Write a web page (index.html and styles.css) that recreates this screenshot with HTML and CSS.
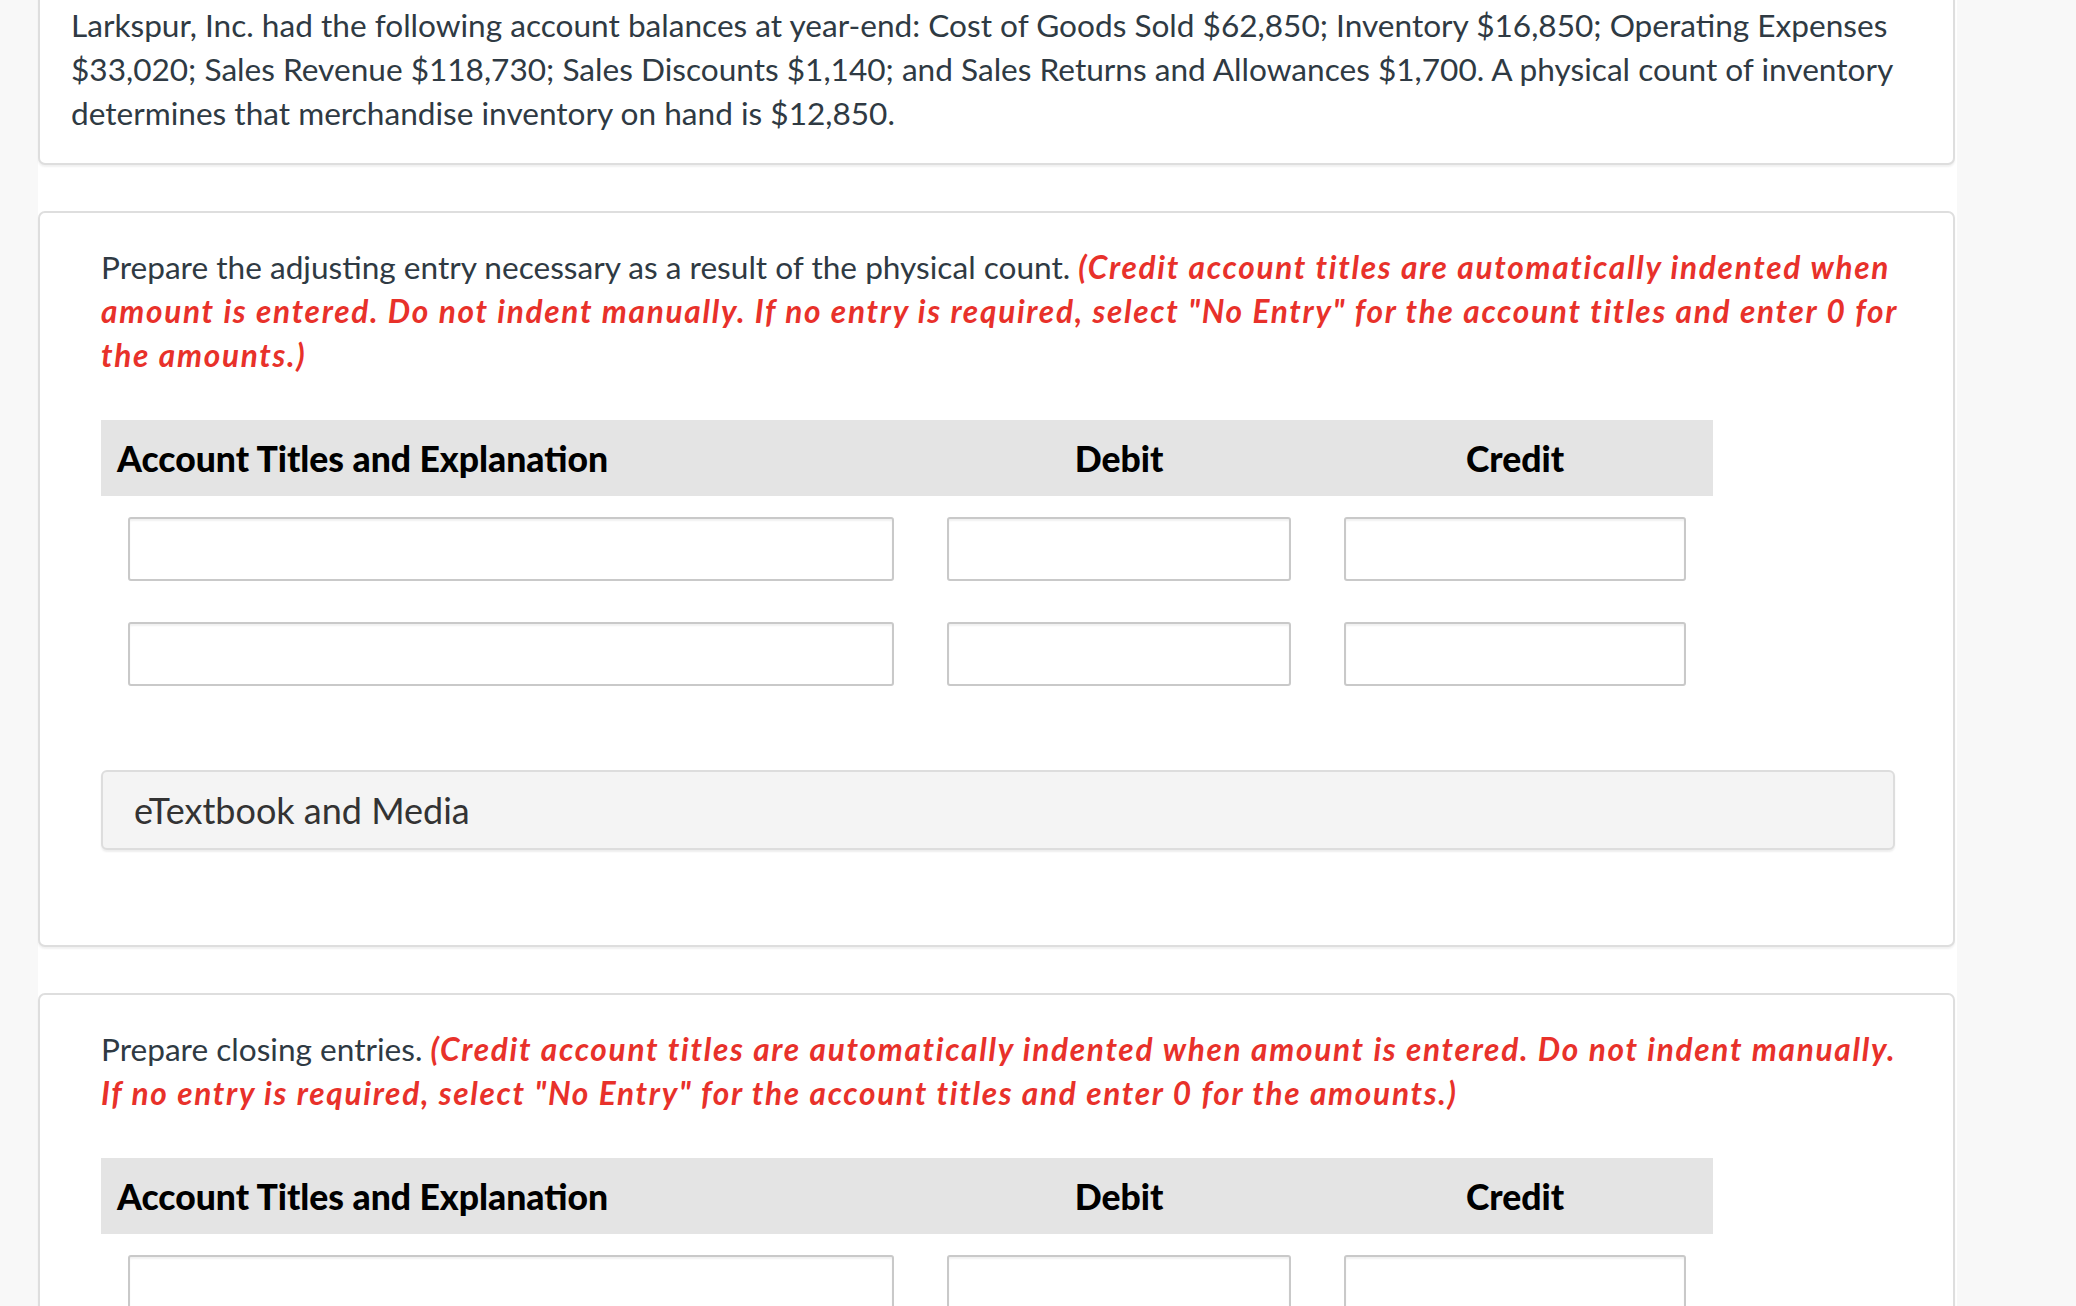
FILE: index.html
```html
<!DOCTYPE html>
<html lang="en">
<head>
<meta charset="utf-8">
<title>Larkspur, Inc.</title>
<link rel="stylesheet" href="styles.css">
</head>
<body>
<div class="page">
  <main class="column">
    <section class="card card-intro">
      <p class="body-text">Larkspur, Inc. had the following account balances at year-end: Cost of Goods Sold $62,850; Inventory $16,850; Operating Expenses $33,020; Sales Revenue $118,730; Sales Discounts $1,140; and Sales Returns and Allowances $1,700. A physical count of inventory determines that merchandise inventory on hand is $12,850.</p>
    </section>

    <section class="card card-part">
      <p class="body-text">Prepare the adjusting entry necessary as a result of the physical count. <em class="note">(Credit account titles are automatically indented when amount is entered. Do not indent manually. If no entry is required, select "No Entry" for the account titles and enter 0 for the amounts.)</em></p>
      <div class="journal">
        <div class="jhead">
          <div class="hcell hcell-title">Account Titles and Explanation</div>
          <div class="hcell hcell-num">Debit</div>
          <div class="hcell hcell-num">Credit</div>
        </div>
        <div class="jrow">
          <div class="jcell"><input class="field" type="text" aria-label="Account title"></div>
          <div class="jcell"><input class="field" type="text" aria-label="Debit"></div>
          <div class="jcell"><input class="field" type="text" aria-label="Credit"></div>
        </div>
        <div class="jrow">
          <div class="jcell"><input class="field" type="text" aria-label="Account title"></div>
          <div class="jcell"><input class="field" type="text" aria-label="Debit"></div>
          <div class="jcell"><input class="field" type="text" aria-label="Credit"></div>
        </div>
      </div>
      <div class="media">eTextbook and Media</div>
    </section>

    <section class="card card-part">
      <p class="body-text">Prepare closing entries. <em class="note">(Credit account titles are automatically indented when amount is entered. Do not indent manually. If no entry is required, select "No Entry" for the account titles and enter 0 for the amounts.)</em></p>
      <div class="journal">
        <div class="jhead">
          <div class="hcell hcell-title">Account Titles and Explanation</div>
          <div class="hcell hcell-num">Debit</div>
          <div class="hcell hcell-num">Credit</div>
        </div>
        <div class="jrow">
          <div class="jcell"><input class="field" type="text" aria-label="Account title"></div>
          <div class="jcell"><input class="field" type="text" aria-label="Debit"></div>
          <div class="jcell"><input class="field" type="text" aria-label="Credit"></div>
        </div>
        <div class="jrow">
          <div class="jcell"><input class="field" type="text" aria-label="Account title"></div>
          <div class="jcell"><input class="field" type="text" aria-label="Debit"></div>
          <div class="jcell"><input class="field" type="text" aria-label="Credit"></div>
        </div>
      </div>
    </section>
  </main>
</div>
</body>
</html>
```

FILE: styles.css
```css
* { box-sizing: border-box; }

html, body {
  margin: 0;
  padding: 0;
  background: #f8f8f8;
  overflow: hidden;
}

body {
  font-family: Lato, "Open Sans", "Liberation Sans", sans-serif;
  color: #2f3a43;
}

.page {
  height: 1306px;
  overflow: hidden;
}

.column {
  margin-left: 38px;
  width: 1919px;
  background: #ffffff;
  margin-top: -31px;
  padding-bottom: 400px;
}

.card {
  margin-right: 2px;
  background: #ffffff;
  border: 2px solid #dedede;
  border-radius: 7px;
  box-shadow: 0 2px 2px rgba(0, 0, 0, 0.06);
}

.card + .card {
  margin-top: 46px;
}

.card-intro {
  padding: 32px 30px 28px 31px;
}

.card-part {
  padding: 32px 58px 95px 61px;
}

.body-text {
  margin: 0;
  font-size: 31.6px;
  line-height: 44px;
}

.card-part .body-text {
  margin-right: -10px;
}

.note {
  color: #e8312a;
  font-style: italic;
  font-weight: 700;
  letter-spacing: 1.7px;
}

.journal {
  margin-top: 43px;
  width: 1612px;
}

.jhead {
  display: grid;
  grid-template-columns: 820px 396px 396px;
  height: 76px;
  align-items: center;
  background: #e4e4e4;
  color: #000000;
  font-weight: 900;
  font-size: 35.5px;
}

.hcell-title {
  padding-left: 16px;
}

.hcell-num {
  text-align: center;
}

.jrow {
  display: grid;
  grid-template-columns: 820px 396px 396px;
  padding: 21px 0 20px;
}

.jcell {
  padding: 0 27px 0 27px;
}

.jrow .jcell:nth-child(2) {
  padding: 0 26px 0 26px;
}

.field {
  display: block;
  width: 100%;
  height: 64px;
  margin: 0;
  border: 2px solid #c9c9c9;
  border-radius: 3px;
  background: #ffffff;
  box-shadow: inset 0 2px 2px rgba(0, 0, 0, 0.06);
  font: inherit;
  font-size: 28px;
  padding: 0 12px;
}

.media {
  margin-top: 64px;
  height: 80px;
  display: flex;
  align-items: center;
  padding-left: 31px;
  background: #f4f4f4;
  border: 2px solid #dddddd;
  border-radius: 6px;
  box-shadow: 0 2px 2px rgba(0, 0, 0, 0.07);
  font-size: 36px;
  color: #333333;
}
```
